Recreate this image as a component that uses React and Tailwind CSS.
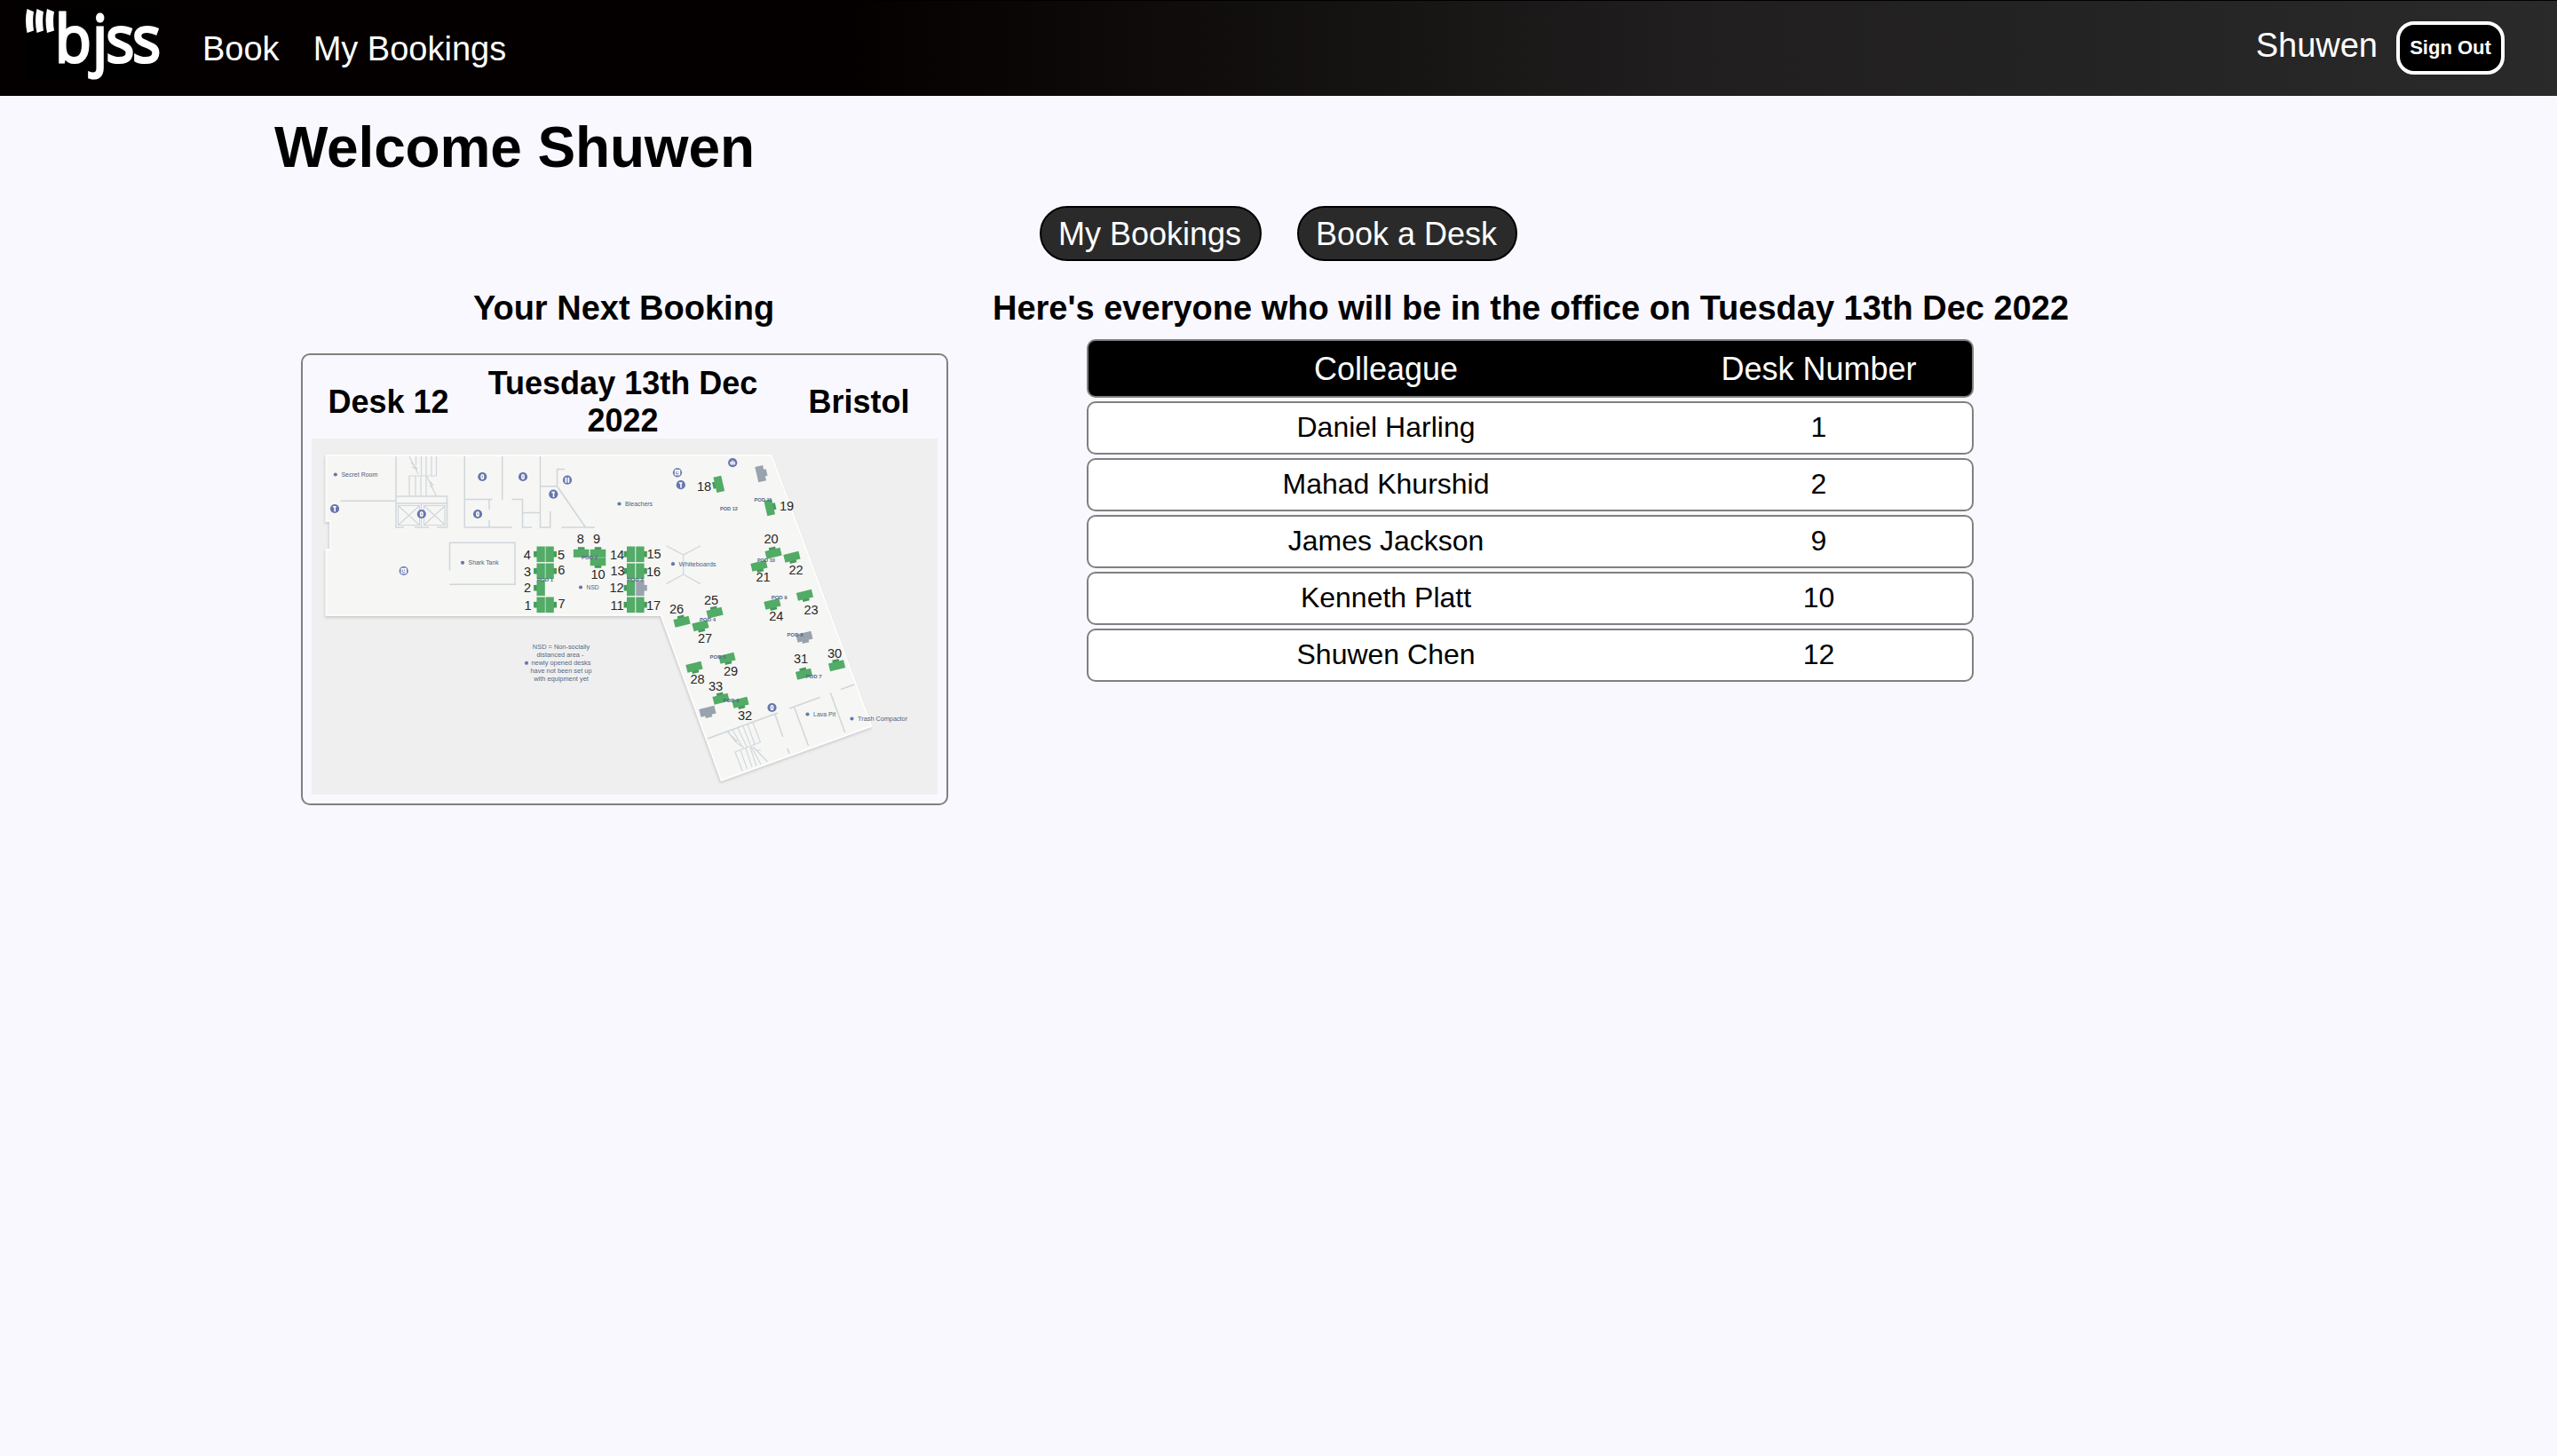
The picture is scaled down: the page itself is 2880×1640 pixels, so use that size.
const DESK = '#52ab66';
const BUMP = '#479a5a';
const GREY = '#98a3ae';
const WALL = '#cfd6da';

// Desks seated back to back: x, y of the top-left corner, side of the chair.
const UPRIGHT = [
  [604.5, 615.5, 'l'], [614.5, 615.5, 'r'],
  [604.5, 634.5, 'l'], [614.5, 634.5, 'r'],
  [604.5, 653.5, 'l'],
  [604.5, 672.5, 'l'], [614.5, 672.5, 'r'],
  [706, 615.5, 'l'], [716.3, 615.5, 'r'],
  [706, 634.5, 'l'], [716.3, 634.5, 'r'],
  [706, 653.5, 'l'], [716.3, 653.5, 'r', true],
  [706, 672.5, 'l'], [716.3, 672.5, 'r'],
];

// Loose desks: centre x, centre y, rotation (0 = chair above), reserved flag.
const LOOSE = [
  [654.7, 623, 0], [673.5, 623, 0], [673.5, 633, 180],
  [809.5, 545.5, -103], [857, 533.5, 77, true], [867, 571.5, 77],
  [871, 623, -14], [892, 627.5, 166], [855, 637.5, 166],
  [906.5, 670.5, 166], [870, 680.5, 166],
  [805, 690, -14], [768, 700, -14], [789, 705, 166],
  [906, 717.5, 166, true], [942.5, 749.5, -14], [905.5, 759, -14],
  [819, 741.5, 166], [782, 751.5, 166],
  [812, 787, -14], [834, 791.5, 166], [797, 801.5, 166, true],
];

const NUMBERS = [
  ['4', 593.7, 630], ['5', 632, 630], ['3', 594, 649], ['6', 632.3, 647],
  ['2', 594, 666.5], ['1', 594.5, 686.5], ['7', 632.5, 685],
  ['8', 653.7, 611.5], ['9', 672, 611.5], ['10', 673.5, 652],
  ['14', 695, 630], ['13', 695.5, 647.5], ['12', 694.5, 666.5], ['11', 695, 686.5],
  ['15', 736.5, 628.5], ['16', 736, 649], ['17', 736, 686.5],
  ['18', 793, 553], ['19', 886, 574.5], ['20', 868.5, 612], ['21', 859.5, 654.5],
  ['22', 896.5, 646.5], ['23', 913.5, 691.5], ['24', 874.3, 699], ['25', 801, 681],
  ['26', 762, 690.5], ['27', 794, 723.5], ['28', 785.5, 769.5], ['29', 823, 761],
  ['30', 940, 741], ['31', 902, 746.5], ['32', 839, 810.5], ['33', 806, 777.5],
];

const PODS = [
  ['POD 1', 614, 654.5], ['POD 2', 664, 630], ['POD 3', 715.5, 654.5],
  ['POD 12', 821, 574.5], ['POD 11', 859.5, 564.8], ['POD 10', 863, 632.5],
  ['POD 9', 877.7, 675], ['POD 4', 797, 700], ['POD 5', 808.5, 741.8],
  ['POD 8', 895.5, 717], ['POD 7', 916.5, 763.8], ['POD 6', 823.5, 791.3],
];

const PLACES = [
  ['Secret Room', 377.8, 534.5, 41], ['Shark Tank', 521, 633.8, 34],
  ['Bleachers', 697.5, 567.5, 31], ['NSD', 654, 661.5, 14],
  ['Whiteboards', 758, 635.2, 42], ['Lava Pit', 909.5, 804.5, 25],
  ['Trash Compactor', 959.5, 809.5, 56],
];

const PINS = [
  [543.3, 537, 'd'], [589, 537, 'd'], [639, 540.7, 'ii'], [623.3, 556.7, 't'],
  [377, 573, 't'], [474.8, 579, 'd'], [538, 579, 'd'], [454.7, 643, 'box'],
  [763, 532.3, 'box'], [766.8, 546.2, 't'], [825.2, 521.2, 'm'], [869.5, 797, 'd'],
];

function Desk({ x, y, r, grey }) {
  return (
    <g transform={`translate(${x} ${y}) rotate(${r})`}>
      <rect x="-3.8" y="-6.8" width="7.6" height="4" fill={grey ? GREY : BUMP} />
      <rect x="-8.8" y="-4.2" width="17.6" height="9" fill={grey ? GREY : DESK} />
    </g>
  );
}

function Pin({ x, y, kind }) {
  return (
    <g transform={`translate(${x} ${y})`}>
      <circle r="5.1" fill="#6776ae" />
      {kind === 'd' && (
        <g>
          <ellipse rx="2" ry="3.1" fill="#fff" />
          <path d="M0 -1.4V1.4" stroke="#6776ae" strokeWidth="0.9" />
        </g>
      )}
      {kind === 't' && <path d="M-2 -2.2H1.6M0.2 -2V3.2" stroke="#fff" strokeWidth="1.6" fill="none" />}
      {kind === 'ii' && <path d="M-1.6 -3V3M1.4 -3V3" stroke="#fff" strokeWidth="1.8" fill="none" />}
      {kind === 'box' && (
        <g>
          <rect x="-3.2" y="-3.2" width="6.4" height="6.4" rx="1" fill="#fff" />
          <path d="M-1.4 -1.5V1.6H1.6M0.8 -1.6V0" stroke="#6776ae" strokeWidth="0.9" fill="none" />
        </g>
      )}
      {kind === 'm' && <path d="M-2.4 -0.6H2.4V1.8H-2.4ZM-1.5 -2H1.5" stroke="#fff" strokeWidth="0.9" fill="#c9cfe6" />}
    </g>
  );
}

function FloorPlan() {
  return (
    <svg viewBox="351 494 705 401" className="block h-[401px] w-[705px] bg-[#efefef]" fontFamily='"Liberation Sans", Arial, sans-serif'>
      <defs>
        <filter id="soft" x="-5%" y="-5%" width="110%" height="110%">
          <feDropShadow dx="-0.8" dy="2" stdDeviation="1.6" floodColor="#000" floodOpacity="0.16" />
        </filter>
      </defs>
      <path
        d="M367.5 513H869L981.5 818L812.5 879L744.5 693H367.5V619H372V587H367.5Z"
        fill="#f6f6f4" stroke="#fff" strokeWidth="1.4" filter="url(#soft)"
      />

      <g fill="none" stroke={WALL} strokeWidth="1.5">
        <path d="M446 514V594H455M383.5 564.3H446M467 594H483M492 594H503.5V559H446M446 567H503.5" />
        <path d="M448.5 569.5H472.5V591.5H448.5ZM477.5 569.5H501V591.5H477.5ZM449 570L472 591M472 570L449 591M478 570L501 591M501 570L478 591M474.5 567V594" strokeWidth="1.1" />
        <path d="M461 558V536H491.5V514M468 536V558M474 536V558M480 536V558M486 514V536M480 514V536M474.5 514V536M468.5 514V524M461 514L471 534M463 521L470 528M464 526L470 529M481 537L491 558M483 541L488 547M484 547L488 550" strokeWidth="1.2" />
        <path d="M523.3 514V594H576.5M523.3 562.5H554.5M565.7 514V563M576.5 562.5H588.5V594H599M551 563V574M551 586V594M588.5 577.5H608" />
        <path d="M608.5 514V594H619.7V576M608.5 547.8H627.5V528.5H636M627.5 547.8L659.5 594M632.5 594H670" />
        <path d="M506.5 642.5V611.3H580V658.3H506" />
        <path d="M750.5 614.8L769.7 625L789 614.8M769.7 625V647L750.5 657.6M769.7 647L789 657.6" strokeWidth="1.2" />
        <path d="M797 832L876 803M873 804.5L881.7 830M887 843L889 849" />
        <path d="M889 798L923.5 785.5M894.5 796.5L910.5 840M935.5 780.5L951.7 825M947 776.5L962.5 771" />
        <path d="M819 824L830 835M820 824C824 831 829 838 838 842M825 822L836 841M831 820L841 841M837 818L845 839M842 816L850 838M848 814L856.5 836L828 847L836.5 869M834 845L841.5 866M840 843L847 864M845 842L852 863M846 841L857 861M848 841L864.5 858M852 845H857M827 834H832" strokeWidth="1.1" />
      </g>

      <g>
        {UPRIGHT.map(([x, y, side, grey]) => (
          <g key={`${x}-${y}`}>
            <rect x={side === 'l' ? x - 3.4 : x + 7.5} y={y + 5.4} width="5" height="6.6" fill={grey ? GREY : BUMP} />
            <rect x={x} y={y} width="9.3" height="17.6" fill={grey ? GREY : DESK} />
          </g>
        ))}
        {LOOSE.map(([x, y, r, grey]) => (
          <Desk key={`${x}-${y}`} x={x} y={y} r={r} grey={grey} />
        ))}
      </g>

      <g fill="#55668a" fontSize="5.6" fontWeight="700" textAnchor="middle">
        {PODS.map(([t, x, y]) => <text key={t} x={x} y={y} textLength={t.length > 5 ? 20 : 18} lengthAdjust="spacingAndGlyphs">{t}</text>)}
      </g>

      {PLACES.map(([t, x, y, w]) => (
        <g key={t}>
          <circle cx={x} cy={y} r="2.1" fill="#6776ae" />
          <text x={x + 6.6} y={y + 2.5} fill="#4f5f7c" fontSize="7.4" textLength={w} lengthAdjust="spacingAndGlyphs">{t}</text>
        </g>
      ))}

      <circle cx="593" cy="746.8" r="2.1" fill="#6776ae" />
      <g fill="#566885" fontSize="7.4" textAnchor="middle">
        <text x="632" y="731">NSD = Non-socially</text>
        <text x="631" y="740">distanced area -</text>
        <text x="632" y="749.2">newly opened desks</text>
        <text x="632" y="758">have not been set up</text>
        <text x="632" y="767.2">with equipment yet</text>
      </g>

      {PINS.map(([x, y, kind]) => <Pin key={`${x}-${y}`} x={x} y={y} kind={kind} />)}

      <g fill="#262626" fontSize="14.6" textAnchor="middle">
        {NUMBERS.map(([t, x, y]) => <text key={t} x={x} y={y}>{t}</text>)}
      </g>
    </svg>
  );
}

function Logo() {
  return (
    <svg viewBox="0 0 151 80" className="h-20 w-[151px] overflow-visible bg-black" fill="#fff">
      <path d="M1.5 0L9 3.2Q7.2 13 9 24.5L1.5 27Q-1.5 13 1.5 0Z" />
      <path d="M12.5 0L20 3.2Q18.2 13 20 24.5L12.5 27Q9.5 13 12.5 0Z" />
      <path d="M24 0L32 3.2Q30 13 32 24.5L24 27Q21 13 24 0Z" />
      <g transform="scale(0.9 1)">
        <text x="36.8 83.7 100.6 133.6" y="59.5" fontFamily='"Open Sans", "Noto Sans", sans-serif' fontSize="74" stroke="#fff" strokeWidth="3.2">bjss</text>
      </g>
    </svg>
  );
}

const COLLEAGUES = [
  ['Daniel Harling', 1],
  ['Mahad Khurshid', 2],
  ['James Jackson', 9],
  ['Kenneth Platt', 10],
  ['Shuwen Chen', 12],
];

export default function App() {
  return (
    <div className="min-h-[1640px] w-[2880px] bg-[#f9f8ff] font-['Liberation_Sans',Arial,sans-serif] text-black">
      <header className="flex h-[108px] items-start border-t border-black bg-[linear-gradient(to_right,#050000_33%,#201e1e_66%,#2a2a2a)] pt-[9px] pr-[59px] pl-[29px] text-[38px] leading-[44px] text-white">
        <Logo />
        <nav className="mt-[23px] ml-12 flex gap-[38px]">
          <a>Book</a>
          <a>My Bookings</a>
        </nav>
        <div className="mt-[14px] ml-auto flex items-start gap-[21px]">
          <span className="mt-[5px]">Shuwen</span>
          <button className="h-[60px] w-[122px] rounded-[20px] border-4 border-white bg-black text-[22px] leading-6 font-bold">Sign Out</button>
        </div>
      </header>

      <main className="box-content w-[2264px] pl-[308px]">
        <h1 className="pt-[21px] pl-px text-[64px] leading-[74px] font-bold tracking-[-0.15px]">Welcome Shuwen</h1>
        <div className="mt-[29px] flex justify-center gap-10 text-[36px] leading-[42px] text-white">
          <button className="h-[62px] w-[250px] rounded-full border-2 border-black bg-[#2a2a2a] pt-0.5 pr-0.5">My Bookings</button>
          <button className="h-[62px] w-[248px] rounded-full border-2 border-black bg-[#2a2a2a] pt-0.5 pr-0.5">Book a Desk</button>
        </div>

        <div className="flex items-start">
          <section className="ml-[31px] w-[729px] pt-[32px]">
            <h2 className="pr-0.5 text-center text-[38px] leading-[42px] font-bold">Your Next Booking</h2>
            <div className="mt-[30px] h-[509px] rounded-[10px] border-2 border-[#808080] px-[10px]">
              <div className="grid h-[94px] grid-cols-[173px_355px_1fr] items-center pt-[11px] text-center text-[36px] leading-[42px] font-bold">
                <span>Desk 12</span>
                <span className="px-5">Tuesday 13th Dec 2022</span>
                <span>Bristol</span>
              </div>
              <FloorPlan />
            </div>
          </section>

          <section className="ml-[50px] w-[1212px] pt-[32px]">
            <h2 className="text-center text-[38px] leading-[42px] font-bold whitespace-nowrap">
              Here's everyone who will be in the office on Tuesday 13th Dec 2022
            </h2>
            <div className="mt-[14px] ml-[106px] flex w-[999px] flex-col gap-1 text-center text-[32px]">
              <div className="grid h-[66px] grid-cols-[670px_305px] items-center rounded-[10px] border-2 border-[#808080] bg-black pt-0.5 text-[36px] text-white">
                <span>Colleague</span>
                <span>Desk Number</span>
              </div>
              {COLLEAGUES.map(([name, desk]) => (
                <div key={name} className="grid h-[60px] grid-cols-[670px_305px] items-center rounded-[10px] border-2 border-[#808080] bg-white pb-0.5">
                  <span>{name}</span>
                  <span>{desk}</span>
                </div>
              ))}
            </div>
          </section>
        </div>
      </main>
    </div>
  );
}
